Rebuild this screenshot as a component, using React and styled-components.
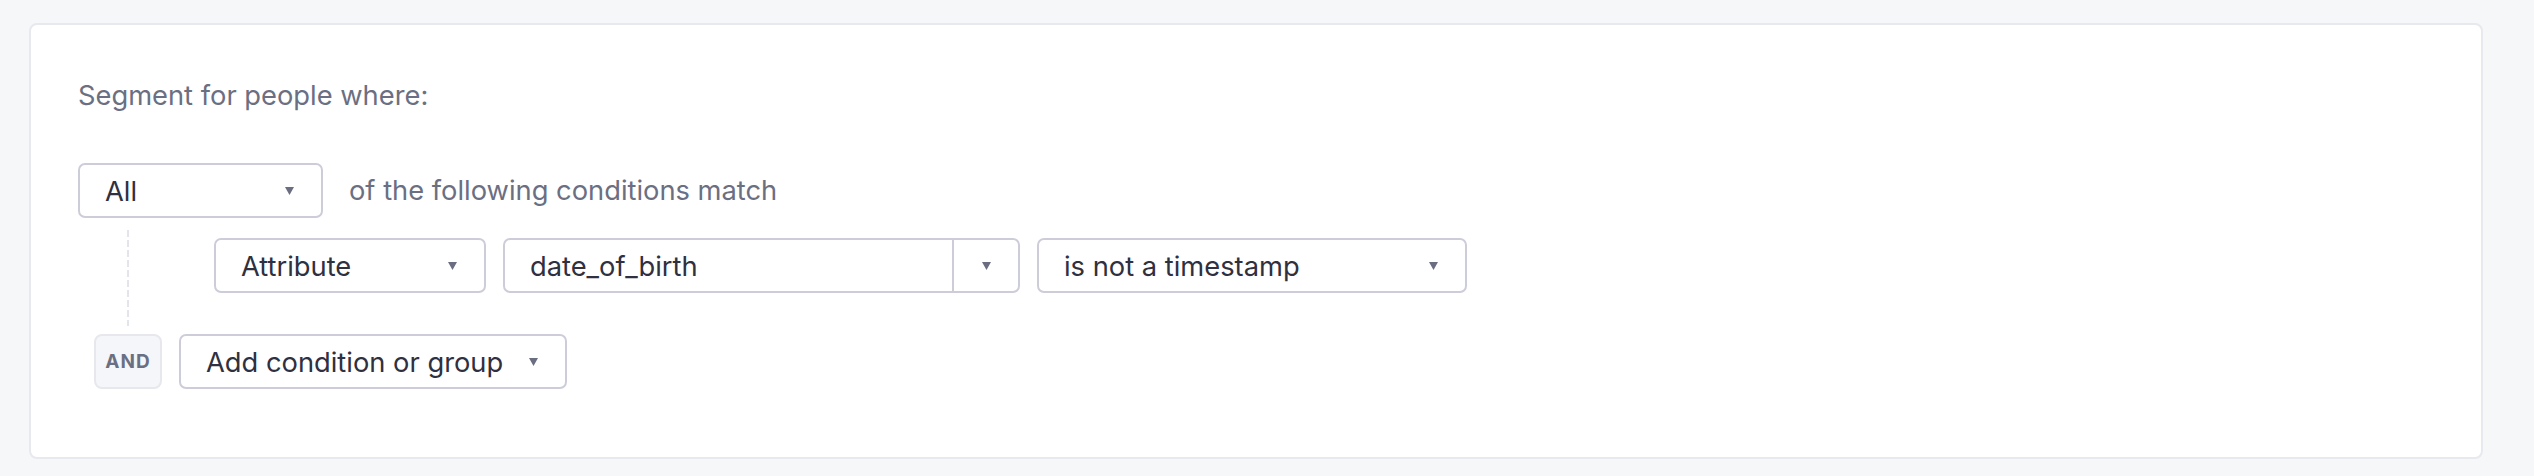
import React from 'react'
import styled, { createGlobalStyle } from 'styled-components';

const GlobalStyle = createGlobalStyle`
    body {
        margin: 0;
        background-color: #f6f7f9;
        font-family: Inter, "Noto Sans", sans-serif;
    }
`;

const Page = styled.div`
    padding: 23px 51px 17px 29px;
`;

const Card = styled.div`
    background-color: #ffffff;
    border: 2px solid #e8e9ee;
    border-radius: 8px;
    padding: 54px 47px 68px 47px;
`;

const Title = styled.p`
    margin: 0;
    font-size: 27.3px;
    line-height: 33px;
    color: #6b6f82;
`;

const MatchRow = styled.div`
    display: flex;
    align-items: center;
    gap: 26px;
    margin-top: 51px;
`;

const MatchText = styled.span`
    font-size: 27.3px;
    color: #6b6f82;
`;

const Conditions = styled.div`
    margin: 12px 0 0 49px;
    padding: 8px 0 33px 87px;
    background: linear-gradient(#e4e5eb 70%, transparent 0) left top / 2px 10px repeat-y;
`;

const ConditionRow = styled.div`
    display: flex;
    align-items: center;
    gap: 17px;
`;

const AndRow = styled.div`
    display: flex;
    align-items: center;
    gap: 17px;
    margin: 8px 0 0 16px;
`;

const AndBadge = styled.div`
    box-sizing: border-box;
    width: 68px;
    height: 55px;
    display: flex;
    align-items: center;
    justify-content: center;
    background-color: #f5f6f9;
    border: 2px solid #e7e8ed;
    border-radius: 8px;
    font-size: 19px;
    font-weight: 700;
    letter-spacing: 1px;
    color: #6b6f82;
`;

const Select = styled.div`
    box-sizing: border-box;
    width: ${p => p.width}px;
    height: 55px;
    display: flex;
    align-items: center;
    justify-content: space-between;
    padding: 1px 27px 0 25px;
    background-color: #ffffff;
    border: 2px solid #cdcdda;
    border-radius: 7px;
    font-size: 27.3px;
    color: #2f3040;
`;

const ComboBox = styled.div`
    box-sizing: border-box;
    width: ${p => p.width}px;
    height: 55px;
    display: flex;
    border: 2px solid #cdcdda;
    border-radius: 7px;
    font-size: 27.3px;
    color: #2f3040;
`;

const ComboValue = styled.div`
    flex: 1;
    display: flex;
    align-items: center;
    padding: 1px 0 0 25px;
`;

const ComboToggle = styled.div`
    width: 64px;
    display: flex;
    align-items: center;
    justify-content: center;
    border-left: 2px solid #cdcdda;
`;

const Caret = () => (
    <svg width='9' height='8' viewBox='0 0 9 8'>
        <polygon points='0,0 9,0 4.5,8' fill='#6b6e80' />
    </svg>
);

const App = () => {
    return (
        <>
            <GlobalStyle />
            <Page>
                <Card>
                    <Title>Segment for people where:</Title>
                    <MatchRow>
                        <Select width={245}>All<Caret /></Select>
                        <MatchText>of the following conditions match</MatchText>
                    </MatchRow>
                    <Conditions>
                        <ConditionRow>
                            <Select width={272}>Attribute<Caret /></Select>
                            <ComboBox width={517}>
                                <ComboValue>date_of_birth</ComboValue>
                                <ComboToggle><Caret /></ComboToggle>
                            </ComboBox>
                            <Select width={430}>is not a timestamp<Caret /></Select>
                        </ConditionRow>
                    </Conditions>
                    <AndRow>
                        <AndBadge>AND</AndBadge>
                        <Select width={388}>Add condition or group<Caret /></Select>
                    </AndRow>
                </Card>
            </Page>
        </>
    )
}

export default App;
